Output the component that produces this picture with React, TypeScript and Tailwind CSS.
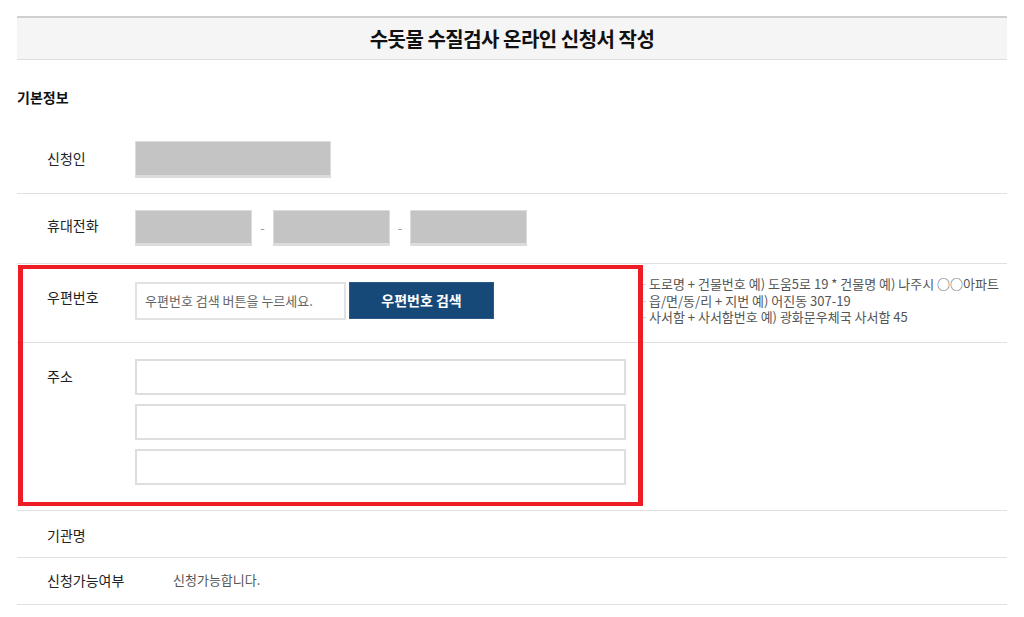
import React from 'react';

const font = { fontFamily: '"Noto Sans CJK KR", "Noto Sans", sans-serif' };

const GrayBox = ({ w }: { w: string }) => (
    <div className={`${w} h-[36px] bg-[#c4c4c4] border border-[#dcdcdc] border-b-[3px]`} />
);

const Row = ({ label, children, className = '', labelClass = 'pt-[7px]', labelWidth = 'w-[118px]' }: {
    label: string;
    children?: React.ReactNode;
    className?: string;
    labelClass?: string;
    labelWidth?: string;
}) => (
    <div className={`flex items-start border-b border-[#e0e0e0] ${className}`}>
        <div className={`${labelWidth} shrink-0 pl-[30px] text-[14px] leading-[20px] text-[#222] ${labelClass}`}>{label}</div>
        {children}
    </div>
);

const App: React.FC = () => {
    const guides = [
        '도로명 + 건물번호 예) 도움5로 19 * 건물명 예) 나주시 ○○아파트',
        '읍/면/동/리 + 지번 예) 어진동 307-19',
        '사서함 + 사서함번호 예) 광화문우체국 사서함 45',
    ];

    return (
        <div className="w-[1024px] h-[617px] bg-white px-[17px] pt-[16px] overflow-hidden" style={font}>
            <div className="h-[44px] bg-[#f5f5f5] border-t-2 border-[#d0d0d0] border-b border-b-[#dddddd] flex items-center justify-center">
                <h1 className="text-[20px] font-bold text-[#111] tracking-[-0.5px]">수돗물 수질검사 온라인 신청서 작성</h1>
            </div>

            <h2 className="mt-[27px] text-[14px] leading-[20px] font-bold text-[#111]">기본정보</h2>

            <div className="mt-[18px]">
                <Row label="신청인" className="pt-[16px] pb-[15px]">
                    <div className="w-[196px] h-[37px] bg-[#c4c4c4] border border-[#dcdcdc] border-b-[3px]" />
                </Row>

                <Row label="휴대전화" className="pt-[16px] pb-[17px]" labelClass="pt-[5px]">
                    <div className="flex items-center">
                        <GrayBox w="w-[117px]" />
                        <span className="w-[21px] text-center text-[13px] text-[#999]">-</span>
                        <GrayBox w="w-[117px]" />
                        <span className="w-[20px] text-center text-[13px] text-[#999]">-</span>
                        <GrayBox w="w-[117px]" />
                    </div>
                </Row>

                <div className="relative">
                    <Row label="우편번호" className="pt-[18px] pb-[22px]" labelClass="pt-[5px]">
                        <div className="w-[508px] shrink-0 flex items-start">
                            <div className="w-[211px] h-[38px] border-2 border-[#e2e2e2] flex items-center pl-[8px] text-[13px] text-[#666]">
                                우편번호 검색 버튼을 누르세요.
                            </div>
                            <button className="ml-[3px] w-[145px] h-[37px] bg-[#164878] border border-[#2c5a88] text-white text-[14px] font-bold">
                                우편번호 검색
                            </button>
                        </div>
                        <ul className="-mt-[6px] -mb-[12px] text-[13px] leading-[16.5px] text-[#555] whitespace-nowrap">
                            {guides.map((g) => (
                                <li key={g} className="flex">
                                    <span className="w-[6px] shrink-0 text-[9px] text-[#bbb]">-</span>
                                    <span>{g}</span>
                                </li>
                            ))}
                        </ul>
                    </Row>

                    <Row label="주소" className="pt-[16px] pb-[25px]">
                        <div className="flex flex-col gap-[9px]">
                            <div className="w-[491px] h-[36px] border-2 border-[#dedede]" />
                            <div className="w-[491px] h-[36px] border-2 border-[#dedede]" />
                            <div className="w-[491px] h-[36px] border-2 border-[#dedede]" />
                        </div>
                    </Row>

                    <div className="absolute left-[1px] top-[1px] w-[625px] h-[241px] border-x-[5px] border-y-[4px] border-[#ee1c25] pointer-events-none" />
                </div>

                <Row label="기관명" className="pt-[14px] pb-[12px]" labelClass="" />

                <Row label="신청가능여부" className="pt-[12px] pb-[14px]" labelClass="" labelWidth="w-[156px]">
                    <div className="text-[13px] leading-[20px] text-[#555]">신청가능합니다.</div>
                </Row>
            </div>
        </div>
    );
};

export default App;
